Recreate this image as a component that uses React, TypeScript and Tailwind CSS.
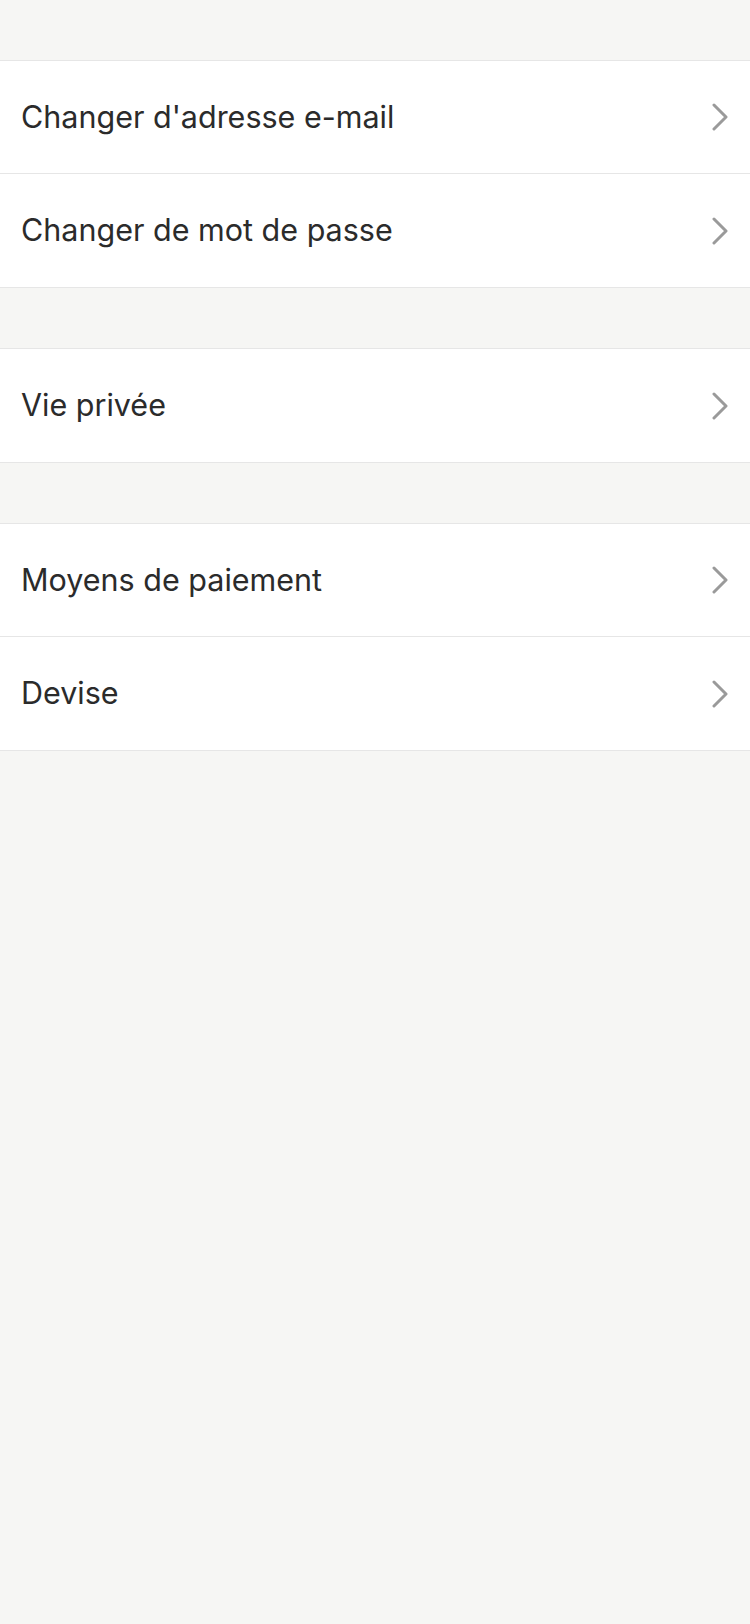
import React from "react";

const Chevron = () => (
  <svg width="18" height="28" viewBox="0 0 18 28" fill="none" className="shrink-0">
    <path d="M3 2 L15 14 L3 26" stroke="#9a9a9a" strokeWidth="3" strokeLinecap="round" strokeLinejoin="round" />
  </svg>
);

const Section = ({ items }: { items: string[] }) => (
  <div className="border-y border-[#e6e6e6] bg-white">
    {items.map((it, i) => (
      <div key={it} className={`flex h-[113px] items-center justify-between pl-[21px] pr-[21px] ${i < items.length - 1 ? "border-b border-[#e6e6e6]" : ""}`}>
        <span className="text-[30.5px] leading-none text-[#2b2b2b]" style={{ fontFamily: "Inter, 'Noto Sans', sans-serif" }}>{it}</span>
        <Chevron />
      </div>
    ))}
  </div>
);

export default function App() {
  return (
    <div className="flex min-h-[1624px] w-[750px] flex-col gap-[60px] bg-[#f6f6f4] pt-[60px]">
      <Section items={["Changer d'adresse e-mail", "Changer de mot de passe"]} />
      <Section items={["Vie privée"]} />
      <Section items={["Moyens de paiement", "Devise"]} />
    </div>
  );
}
